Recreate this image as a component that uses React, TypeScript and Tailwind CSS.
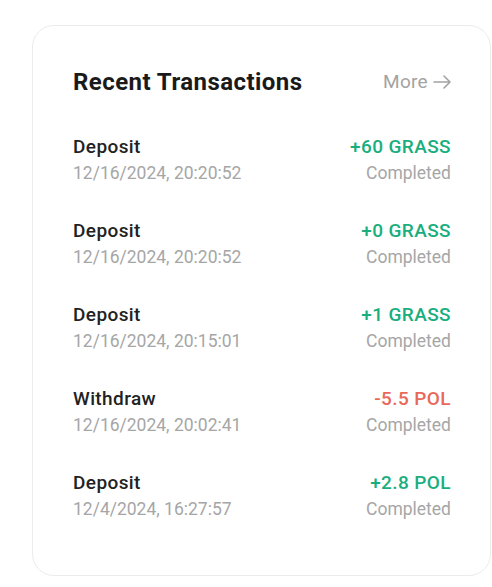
const rows = [
  { type: "Deposit", date: "12/16/2024, 20:20:52", amount: "+60 GRASS", positive: true },
  { type: "Deposit", date: "12/16/2024, 20:20:52", amount: "+0 GRASS", positive: true },
  { type: "Deposit", date: "12/16/2024, 20:15:01", amount: "+1 GRASS", positive: true },
  { type: "Withdraw", date: "12/16/2024, 20:02:41", amount: "-5.5 POL", positive: false },
  { type: "Deposit", date: "12/4/2024, 16:27:57", amount: "+2.8 POL", positive: true },
];

export default function App() {
  return (
    <div className="min-h-[587px] w-[492px] bg-white pt-[25px] pl-[32px] font-['Roboto',sans-serif]">
      <div className="w-[459px] h-[551px] rounded-[22px] border border-[#ececec] bg-white pl-[40px] pr-[39px] pt-[40px]">
        {/* Header */}
        <div className="flex items-center justify-between">
          <h2 className="text-[24px] leading-[32px] font-bold tracking-[0.45px] text-[#1a1a1a]">Recent Transactions</h2>
          <span className="flex items-center gap-[5px] text-[19px] leading-[32px] tracking-[0.3px] text-[#a3a3a3]">
            More
            <svg width="18" height="14" viewBox="0 0 18 14" fill="none" stroke="currentColor" strokeWidth="1.6" strokeLinecap="round" strokeLinejoin="round">
              <path d="M1 7h16M11 1l6 6-6 6" />
            </svg>
          </span>
        </div>

        {/* List */}
        <div className="mt-[37px] flex flex-col gap-[32px]">
          {rows.map((r, i) => (
            <div key={i} className="flex items-start justify-between">
              <div className="flex flex-col">
                <span className="text-[19px] leading-[24px] font-medium tracking-[0.4px] text-[#222222]">{r.type}</span>
                <span className="text-[17.5px] leading-[28px] text-[#a6a6a6]">{r.date}</span>
              </div>
              <div className="flex flex-col items-end">
                <span
                  className={
                    r.positive
                      ? "text-[19px] leading-[24px] font-medium tracking-[0.4px] text-[#1aae7e]"
                      : "text-[19px] leading-[24px] font-medium tracking-[0.4px] text-[#e8695a]"
                  }
                >
                  {r.amount}
                </span>
                <span className="text-[17.5px] leading-[28px] text-[#a6a6a6]">Completed</span>
              </div>
            </div>
          ))}
        </div>
      </div>
    </div>
  );
}
